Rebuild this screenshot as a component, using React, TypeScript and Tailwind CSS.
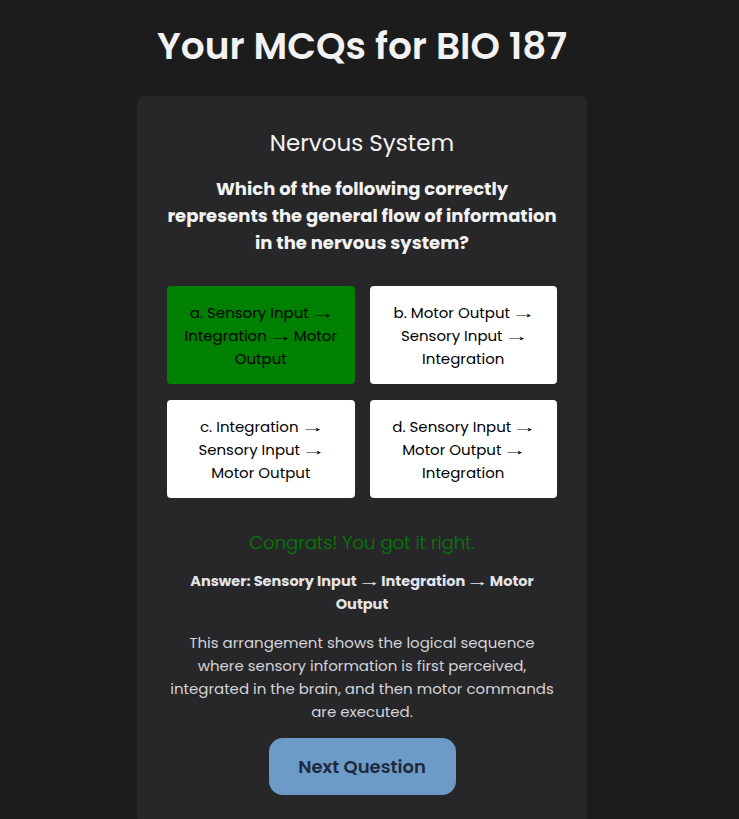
import { useState, Fragment } from 'react'

const options = [
  { key: 'a', text: 'Sensory Input → Integration → Motor Output' },
  { key: 'b', text: 'Motor Output → Sensory Input → Integration' },
  { key: 'c', text: 'Integration → Sensory Input → Motor Output' },
  { key: 'd', text: 'Sensory Input → Motor Output → Integration' },
]

// arrows are stretched a bit so they come out long and thin
function Flow({ text }: { text: string }) {
  const parts = text.split('→')
  return (
    <>
      {parts.map((p, i) => (
        <Fragment key={i}>
          {p}
          {i < parts.length - 1 && (
            <span className="inline-block mx-[2px] scale-x-[1.6] font-['Liberation_Sans'] font-normal">→</span>
          )}
        </Fragment>
      ))}
    </>
  )
}

export default function App() {
  const [selected, setSelected] = useState('a')
  const correct = 'a'

  return (
    <div className="min-h-screen bg-[#1c1c1c] font-['Poppins','DejaVu_Sans',sans-serif] text-[#f2f2f2] pt-[23px] pr-[15px]">
      <h1 className="text-center text-[37.5px] leading-[46px] font-semibold">Your MCQs for BIO 187</h1>

      <div className="mx-auto mt-[27px] w-[450px] rounded-lg bg-[#27272a] px-[30px] pt-[30px] pb-[30px] text-center">
        {/* Topic */}
        <h2 className="text-[23px] leading-[34px]">Nervous System</h2>
        <p className="mx-auto mt-[15px] text-[18px] leading-[27px] font-bold">
          Which of the following correctly represents the general flow of information in the nervous system?
        </p>

        {/* Options */}
        <div className="mt-[30px] grid grid-cols-2 gap-x-[15px] gap-y-[16px]">
          {options.map((o) => (
            <button
              key={o.key}
              onClick={() => setSelected(o.key)}
              className={`rounded-[4px] px-[14px] py-[14.5px] text-[15px] leading-[23px] text-black ${
                selected === o.key && o.key === correct ? 'bg-[#008000]' : 'bg-white'
              }`}
            >
              {o.key}. <Flow text={o.text} />
            </button>
          ))}
        </div>

        {/* Feedback */}
        <p className="mt-[31px] text-[18px] leading-[27px] font-light text-[#008000]">Congrats! You got it right.</p>
        <p className="mt-[14px] text-[14.5px] leading-[23px] font-bold text-[#e4e4e7]">
          Answer: <Flow text="Sensory Input → Integration → Motor Output" />
        </p>
        <p className="mx-auto mt-[15px] text-[15px] leading-[23px] text-[#d4d4d8]">
          This arrangement shows the logical sequence where sensory information is first perceived, integrated in the brain, and then motor commands are executed.
        </p>

        <button className="mt-[15px] h-[57px] w-[187px] rounded-[14px] bg-[#6d9bc8] text-[18px] font-semibold text-[#1e2a3b]">
          Next Question
        </button>
      </div>
    </div>
  )
}
